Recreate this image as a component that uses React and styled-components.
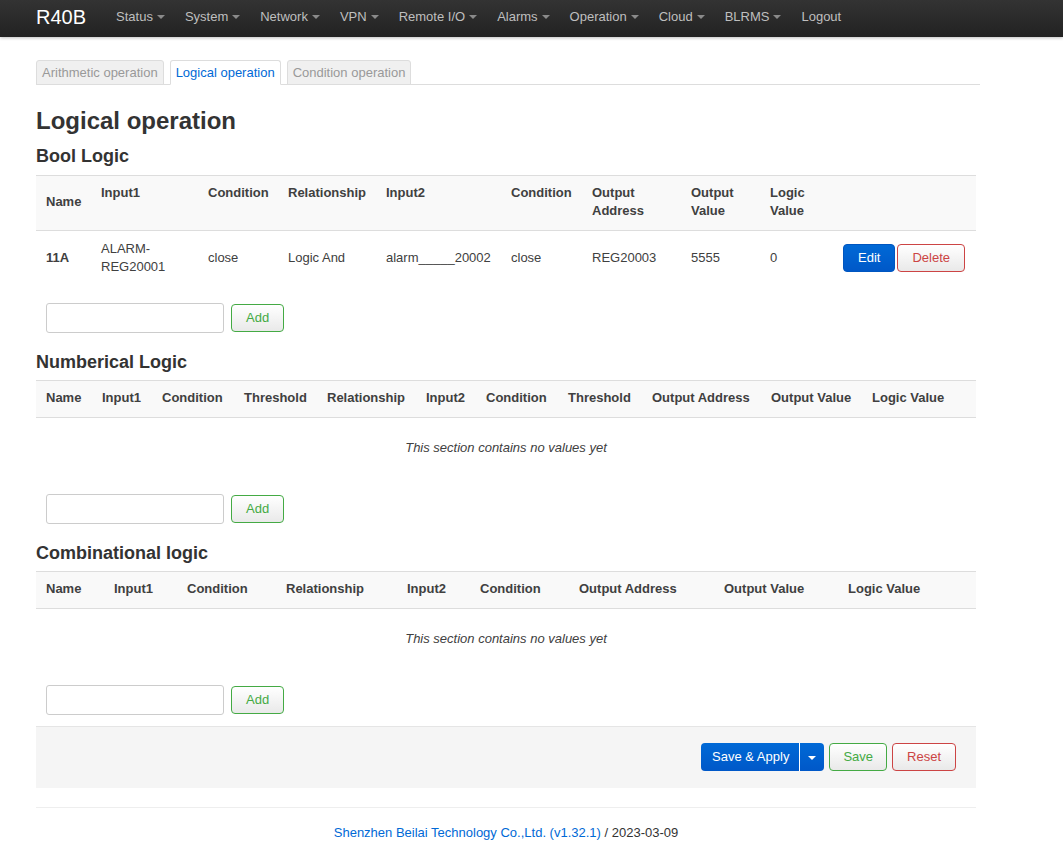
import styled, { createGlobalStyle } from "styled-components";

const GlobalStyle = createGlobalStyle`
  body {
    margin: 0;
    font-family: "Liberation Sans", Arial, sans-serif;
    font-size: 13px;
    line-height: 18px;
    color: #404040;
    background: #fff;
  }
`;

const NAV = ["Status", "System", "Network", "VPN", "Remote I/O", "Alarms", "Operation", "Cloud", "BLRMS"];

const boolCols = [
  { label: "Name", w: 55, mid: true },
  { label: "Input1", w: 107 },
  { label: "Condition", w: 80 },
  { label: "Relationship", w: 98 },
  { label: "Input2", w: 125 },
  { label: "Condition", w: 81 },
  { label: "Output Address", w: 99 },
  { label: "Output Value", w: 79 },
  { label: "Logic Value", w: 73 },
  { label: "", w: 143 },
];

const numCols = [
  ["Name", 56], ["Input1", 60], ["Condition", 82], ["Threshold", 83], ["Relationship", 99],
  ["Input2", 60], ["Condition", 82], ["Threshold", 84], ["Output Address", 119],
  ["Output Value", 101], ["Logic Value", 114],
];

const combCols = [
  ["Name", 68], ["Input1", 73], ["Condition", 99], ["Relationship", 121], ["Input2", 73],
  ["Condition", 99], ["Output Address", 145], ["Output Value", 124], ["Logic Value", 138],
];

const Navbar = styled.header`
  height: 37px;
  background: linear-gradient(to bottom, #333, #222);
  box-shadow: 0 1px 3px rgba(0, 0, 0, 0.25);
  display: flex;
  align-items: center;
  padding-left: 36px;
  padding-bottom: 4px;
  box-sizing: border-box;
`;

const Brand = styled.span`
  color: #fff;
  font-size: 20px;
  margin-right: 20px;
  line-height: 24px;
`;

const NavItem = styled.span`
  color: #bfbfbf;
  font-size: 13px;
  padding: 0 10px;
  display: flex;
  align-items: center;
`;

const Caret = styled.span`
  display: inline-block;
  width: 0;
  height: 0;
  margin-left: ${(p) => (p.$flush ? 0 : 4)}px;
  margin-top: 1px;
  border-top: 4px solid ${(p) => p.$color || "#8a8a8a"};
  border-left: 4px solid transparent;
  border-right: 4px solid transparent;
`;

const Main = styled.main`
  width: 940px;
  margin-left: 36px;
`;

const TabBar = styled.ul`
  display: flex;
  gap: 6px;
  list-style: none;
  margin: 23px -4px 0 0;
  padding: 0;
  border-bottom: 1px solid #ddd;
`;

const Tab = styled.li`
  height: 23px;
  line-height: 23px;
  padding: 0 5px;
  margin-bottom: -1px;
  border: 1px solid #ddd;
  border-bottom-color: ${(p) => (p.$active ? "#fff" : "#ddd")};
  border-radius: 3px 3px 0 0;
  background: ${(p) => (p.$active ? "#fff" : "#f0f0f0")};
  color: ${(p) => (p.$active ? "#0069d6" : "#999")};
`;

const Title = styled.h2`
  font-size: 24px;
  line-height: 30px;
  font-weight: bold;
  color: #333;
  margin: 21px 0 0;
`;

const Section = styled.h3`
  font-size: 18px;
  line-height: 24px;
  font-weight: bold;
  color: #333;
  margin: ${(p) => (p.$first ? "8px 0 7px" : "17px 0 6px")};
`;

const Table = styled.table`
  width: 940px;
  table-layout: fixed;
  border-collapse: collapse;
`;

const Th = styled.th`
  text-align: left;
  font-weight: bold;
  background: #f9f9f9;
  border-top: 1px solid #ddd;
  border-bottom: 1px solid #ddd;
  padding: 8px 10px 10px;
  vertical-align: ${(p) => (p.$mid ? "middle" : "top")};
`;

const Td = styled.td`
  padding: 9px 10px;
  vertical-align: middle;
  font-weight: ${(p) => (p.$bold ? "bold" : "normal")};
  white-space: ${(p) => (p.$nowrap ? "nowrap" : "normal")};
`;

const Empty = styled.td`
  text-align: center;
  font-style: italic;
  padding: 21px 10px 20px;
`;

const AddRow = styled.div`
  display: flex;
  align-items: center;
  gap: 7px;
  margin-top: ${(p) => (p.$first ? 18 : 17)}px;
  padding-left: 10px;
`;

const Input = styled.input`
  width: 178px;
  height: 30px;
  box-sizing: border-box;
  border: 1px solid #ccc;
  border-radius: 3px;
  font: inherit;
  padding: 4px 6px;
`;

const tones = {
  primary: "color:#fff;border-color:#0056c0;background:linear-gradient(#0069d6,#0058c8);",
  add: "color:#4a4;border-color:#4a4;background:linear-gradient(#fff,#e9e9e9);",
  remove: "color:#c44;border-color:#c44;background:linear-gradient(#fff,#e9e9e9);",
};

const Button = styled.button`
  height: 28px;
  box-sizing: border-box;
  padding: 0 ${(p) => p.$px || 14}px;
  border: 1px solid;
  border-radius: 4px;
  font: inherit;
  line-height: 26px;
  cursor: pointer;
  ${(p) => tones[p.$tone]}
`;

const Actions = styled.div`
  display: flex;
  gap: 2px;
`;

const Split = styled.div`
  display: flex;
  height: 28px;
  border-radius: 4px;
  overflow: hidden;
  background: linear-gradient(#0069d6, #0058c8);
  color: #fff;
`;

const SplitMain = styled.span`
  padding: 0 10px 0 11px;
  line-height: 28px;
  border-right: 1px solid #fff;
`;

const SplitDrop = styled.span`
  width: 24px;
  display: flex;
  align-items: center;
  justify-content: center;
`;

const PageActions = styled.div`
  margin-top: 11px;
  background: #f5f5f5;
  border-top: 1px solid #e5e5e5;
  padding: 16px 20px 17px;
  display: flex;
  justify-content: flex-end;
  gap: 5px;
`;

const Footer = styled.footer`
  margin-top: 19px;
  border-top: 1px solid #eee;
  padding-top: 16px;
  text-align: center;
  font-size: 13px;
  color: #333;
`;

const Link = styled.a`
  color: #0069d6;
  text-decoration: none;
`;

function EmptyTable({ cols }) {
  return (
    <Table>
      <thead>
        <tr>
          {cols.map(([label, w], i) => (
            <Th key={i} style={{ width: w - 20 }}>{label}</Th>
          ))}
        </tr>
      </thead>
      <tbody>
        <tr>
          <Empty colSpan={cols.length}>This section contains no values yet</Empty>
        </tr>
      </tbody>
    </Table>
  );
}

function Adder({ first }) {
  return (
    <AddRow $first={first}>
      <Input />
      <Button $tone="add" $px={14}>Add</Button>
    </AddRow>
  );
}

export default function App() {
  return (
    <>
      <GlobalStyle />
      <Navbar>
        <Brand>R40B</Brand>
        {NAV.map((n) => (
          <NavItem key={n}>
            {n}
            <Caret />
          </NavItem>
        ))}
        <NavItem>Logout</NavItem>
      </Navbar>
      <Main>
        <TabBar>
          <Tab>Arithmetic operation</Tab>
          <Tab $active>Logical operation</Tab>
          <Tab>Condition operation</Tab>
        </TabBar>
        <Title>Logical operation</Title>

        <Section $first>Bool Logic</Section>
        <Table>
          <thead>
            <tr>
              {boolCols.map((c, i) => (
                <Th key={i} $mid={c.mid} style={{ width: c.w - 20 }}>
                  {c.label.includes(" ") && i > 5 ? (
                    <>
                      {c.label.split(" ")[0]}
                      <br />
                      {c.label.split(" ")[1]}
                    </>
                  ) : (
                    c.label
                  )}
                </Th>
              ))}
            </tr>
          </thead>
          <tbody>
            <tr>
              <Td $bold>11A</Td>
              <Td>ALARM-<br />REG20001</Td>
              <Td>close</Td>
              <Td>Logic And</Td>
              <Td $nowrap>alarm_____20002</Td>
              <Td>close</Td>
              <Td>REG20003</Td>
              <Td>5555</Td>
              <Td>0</Td>
              <Td>
                <Actions>
                  <Button $tone="primary" $px={14}>Edit</Button>
                  <Button $tone="remove" $px={14}>Delete</Button>
                </Actions>
              </Td>
            </tr>
          </tbody>
        </Table>
        <Adder first />

        <Section>Numberical Logic</Section>
        <EmptyTable cols={numCols} />
        <Adder />

        <Section>Combinational logic</Section>
        <EmptyTable cols={combCols} />
        <Adder />

        <PageActions>
          <Split>
            <SplitMain>Save &amp; Apply</SplitMain>
            <SplitDrop>
              <Caret $color="#fff" $flush />
            </SplitDrop>
          </Split>
          <Button $tone="add" $px={13}>Save</Button>
          <Button $tone="remove" $px={14}>Reset</Button>
        </PageActions>

        <Footer>
          <Link href="#">Shenzhen Beilai Technology Co.,Ltd. (v1.32.1)</Link> / 2023-03-09
        </Footer>
      </Main>
    </>
  );
}
